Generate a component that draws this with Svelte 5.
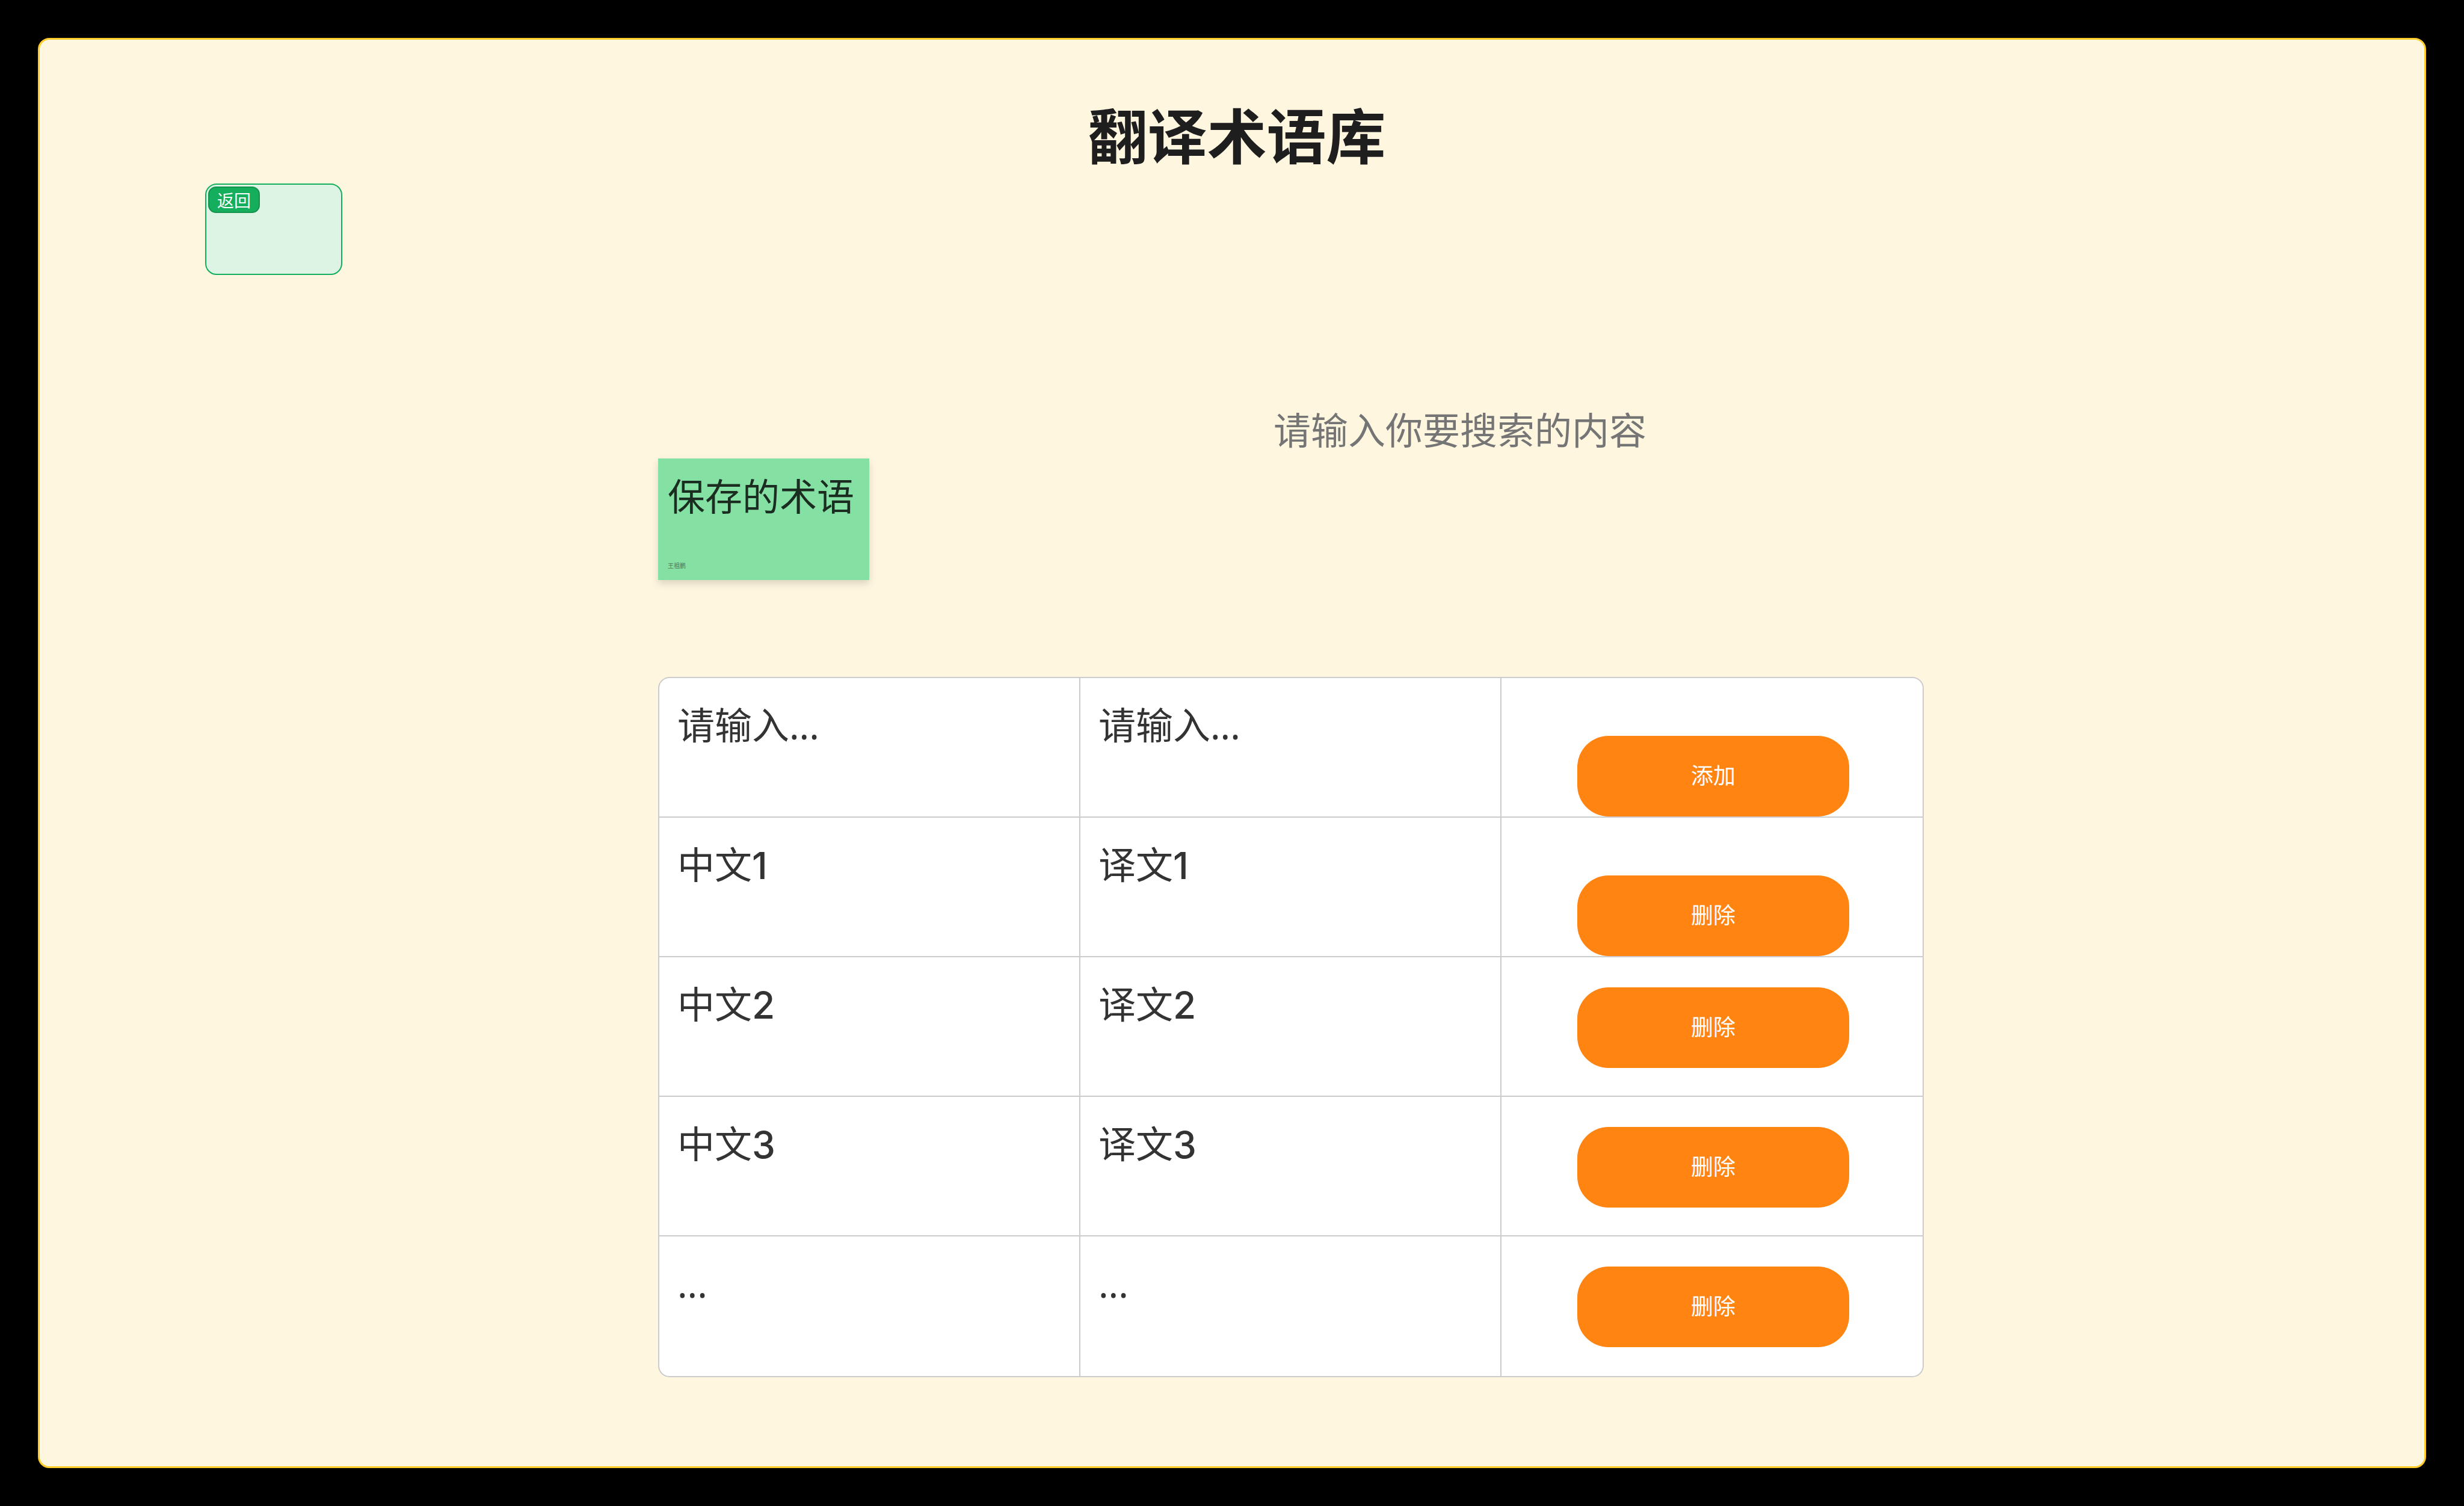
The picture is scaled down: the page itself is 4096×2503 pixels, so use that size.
<script>
  const rows = [
    { source: '中文', target: '译文', index: '1', low: true },
    { source: '中文', target: '译文', index: '2', low: false },
    { source: '中文', target: '译文', index: '3', low: false },
    { source: '...', target: '...', index: '', low: false }
  ];
</script>

<main class="frame">
  <h1>翻译术语库</h1>

  <nav>
    <a class="back" href="#back"><span class="tag">返回</span></a>
  </nav>

  <div class="content">
    <div class="toolbar">
      <section class="note">
        <h2>保存的术语</h2>
        <p>王祖鹏</p>
      </section>
      <input class="search" type="text" aria-label="搜索" placeholder="请输入你要搜索的内容" />
    </div>

    <div class="card">
      <table>
        <tbody>
          <tr>
            <td><input class="entry" type="text" aria-label="中文" placeholder="请输入..." /></td>
            <td><input class="entry" type="text" aria-label="译文" placeholder="请输入..." /></td>
            <td class="action low"><button type="button">添加</button></td>
          </tr>
          {#each rows as row}
            <tr>
              <td>{row.source}<span class="index">{row.index}</span></td>
              <td>{row.target}<span class="index">{row.index}</span></td>
              <td class="action" class:low={row.low}><button type="button">删除</button></td>
            </tr>
          {/each}
        </tbody>
      </table>
    </div>
  </div>
</main>

<style>
  :global(body) {
    background: #000;
    font-family: Inter, 'Noto Sans CJK SC', sans-serif;
  }
  :global(#app) {
    display: flex;
    min-height: 100vh;
    padding: 63px;
    box-sizing: border-box;
  }
  .frame {
    flex: 1;
    box-sizing: border-box;
    border: 3px solid #ffcd29;
    border-radius: 19px;
    background: #fff6e0;
    padding-top: 87px;
  }
  h1 {
    margin: 0 0 2px;
    padding-left: 16px;
    font-size: 99px;
    line-height: 150px;
    font-weight: 700;
    text-align: center;
    color: #1e1e1e;
  }
  nav,
  .content {
    display: grid;
  }
  nav {
    grid-template-columns: 275fr 228fr 3461fr;
  }
  .back {
    grid-column: 2;
    box-sizing: border-box;
    height: 152px;
    padding: 3px;
    border: 2px solid #14ae5c;
    border-radius: 19px;
    background: #ddf3e4;
    text-decoration: none;
  }
  .tag {
    display: inline-block;
    box-sizing: border-box;
    padding: 4px 13px 0;
    border: 2px solid #14934f;
    border-radius: 13px;
    background: #14ae5c;
    color: #fff;
    font-size: 28px;
    line-height: 36px;
  }
  .content {
    grid-template-columns: 1028fr 2104fr 832fr;
    padding-top: 201px;
  }
  .toolbar,
  .card {
    grid-column: 2;
  }
  .toolbar {
    display: grid;
    grid-template-columns: 351fr 672fr 1081fr;
    align-items: start;
  }
  .note {
    display: flex;
    flex-direction: column;
    justify-content: space-between;
    box-sizing: border-box;
    height: 202px;
    margin-top: 104px;
    padding: 18px 16px 16px;
    background: #85e0a3;
    box-shadow: 0 6px 12px rgba(0, 0, 0, 0.14);
  }
  .note h2 {
    margin: 0;
    font-size: 62px;
    line-height: 93px;
    font-weight: 400;
    white-space: nowrap;
    color: #1b2d21;
  }
  .note p {
    margin: 0;
    font-size: 10px;
    line-height: 16px;
    color: #48795a;
  }
  input {
    box-sizing: border-box;
    width: 100%;
    padding: 0;
    border: 0;
    background: none;
    font: inherit;
  }
  .search {
    grid-column: 3;
    height: 116px;
    font-size: 62px;
  }
  .search::placeholder {
    color: #757575;
    opacity: 1;
  }
  .card {
    margin-top: 161px;
    border: 2px solid #ccc;
    border-radius: 19px;
    background: #fff;
    overflow: hidden;
  }
  table {
    width: 100%;
    table-layout: fixed;
    border-collapse: separate;
    border-spacing: 0;
  }
  td {
    box-sizing: border-box;
    height: 232px;
    padding: 32px 30px;
    border-right: 2px solid #ccc;
    border-bottom: 2px solid #ccc;
    vertical-align: top;
    font-family: 'Noto Sans', 'Noto Sans CJK SC', sans-serif;
    font-size: 62px;
    line-height: 93px;
    color: #333;
  }
  td:last-child {
    border-right: 0;
  }
  tr:last-child td {
    border-bottom: 0;
  }
  .index {
    font-family: Inter, sans-serif;
    font-weight: 500;
  }
  .entry {
    display: block;
    height: 93px;
    color: #333;
  }
  .entry::placeholder {
    color: #333;
    opacity: 1;
  }
  .action {
    padding: 50px 0 0 4px;
    text-align: center;
    line-height: 0;
  }
  .action.low {
    padding: 0 0 0 4px;
    vertical-align: bottom;
  }
  button {
    width: 65%;
    height: 134px;
    padding: 0;
    border: 0;
    border-radius: 52px;
    background: #ff8412;
    color: #fff;
    font-family: Inter, 'Noto Sans CJK SC', sans-serif;
    font-size: 37px;
    line-height: 56px;
  }
</style>
